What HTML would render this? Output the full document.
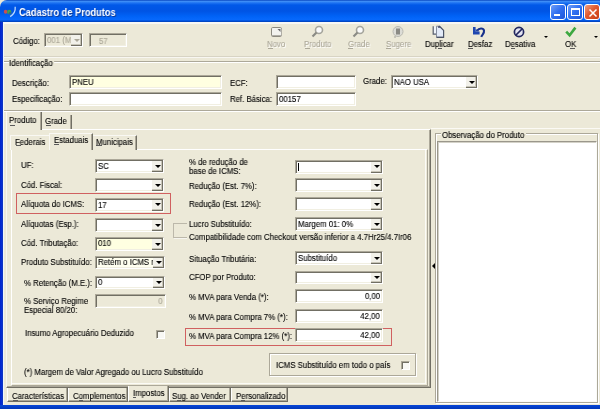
<!DOCTYPE html>
<html><head><meta charset="utf-8"><style>
html,body{margin:0;padding:0;}
body{width:600px;height:409px;position:relative;overflow:hidden;background:#ece9d8;font-family:"Liberation Sans", sans-serif;}
body>div{position:absolute;box-sizing:border-box;}
.t{white-space:nowrap;color:#000;-webkit-text-stroke-width:0.12px;will-change:transform;transform:scaleX(0.94);transform-origin:0 0;}
.title{left:0;top:0;width:600px;height:22px;border-radius:7px 0 0 0;
background:linear-gradient(#0847c0 0px,#3c8cf6 1.5px,#1c72f2 3px,#0058e8 5px,#0054e4 11px,#0062f6 16px,#0668fc 19.5px,#0050d8 21px,#003cb0 22px);}
.tb{position:absolute;top:4px;width:16px;height:16px;border:1px solid #fff;border-radius:3px;box-sizing:border-box;
background:linear-gradient(135deg,#6e9ef8,#2f6ef0 50%,#1e56d8);}
.sk{border-top:1px solid #aca899;border-left:1px solid #aca899;border-bottom:1px solid #fff;border-right:1px solid #fff;
box-shadow:inset 1px 1px 0 #716f64, inset -1px -1px 0 #f1efe2;}
.ddb{background:#f2f1ea;border-right:1px solid #716f64;border-bottom:1px solid #716f64;box-shadow:inset -1px -1px 0 #c8c5b8;}
.arr{width:0;height:0;border-style:solid;border-width:3px 3px 0 3px;border-color:#000 transparent transparent transparent;}
.page{border-top:1px solid #fff;border-left:1px solid #f7f6f0;border-right:1px solid #716f64;border-bottom:1px solid #716f64;
box-shadow:inset -1px -1px 0 #aca899;background:#ece9d8;}
.inner{border-top:1px solid #fff;border-left:1px solid #fff;border-right:1px solid #aca899;border-bottom:1px solid #aca899;box-shadow:inset -1px -1px 0 #ece9d8, inset -2px -2px 0 #fbfbf6;}
.tab{border-top:1px solid #f9f8f3;border-left:1px solid #f9f8f3;border-right:1px solid #716f64;box-shadow:inset -1px 0 0 #aca899;background:#ece9d8;}

.btab{border-bottom:1px solid #716f64;border-left:1px solid #fff;border-right:1px solid #716f64;box-shadow:inset -1px -1px 0 #aca899;background:#ece9d8;}
.cb{width:9px;height:9px;border-top:1px solid #aca899;border-left:1px solid #aca899;border-right:1px solid #fff;border-bottom:1px solid #fff;box-shadow:inset 1px 1px 0 #716f64;background:#f8f8f4;}
.etch{border:1px solid #aca899;box-shadow:1px 1px 0 #fff, inset 1px 1px 0 #fff;}
</style></head><body>
<div class="title"></div>
<div style="left:0px;top:22px;width:3px;height:387px;background:linear-gradient(90deg,#0024c8,#0530d8 70%,#1a3aa8)"></div>
<div style="left:3px;top:22px;width:1px;height:383px;background:#f0f6fa"></div>
<div style="left:0px;top:405px;width:600px;height:4px;background:linear-gradient(#0847d8,#0036b8)"></div>
<svg style="position:absolute;left:0;top:0" width="20" height="22" viewBox="0 0 20 22">
<ellipse cx="5.6" cy="11.8" rx="1.8" ry="2" fill="#c85050"/>
<ellipse cx="9.2" cy="12" rx="2.2" ry="2.3" fill="#40a050"/>
<ellipse cx="10.2" cy="13.2" rx="1.4" ry="1.3" fill="#2a6890"/>
<path d="M10.2 16.6 Q15.8 13.2 15.2 6.8" stroke="#b8d8ff" stroke-width="1.3" fill="none"/></svg>
<div class="t" style="left:19px;top:7px;font-size:10px;line-height:12px;font-weight:bold;color:#fff;letter-spacing:0px;-webkit-text-stroke:0;transform:scaleX(0.925);text-shadow:1px 1px 0 #0a3a9a">Cadastro de Produtos</div>
<div class="tb" style="left:550px"><div style="position:absolute;left:3px;top:9px;width:6px;height:2px;background:#fff"></div></div>
<div class="tb" style="left:567px"><div style="position:absolute;left:2.5px;top:3px;width:9px;height:8px;border:1px solid #fff;border-top-width:2px;box-sizing:border-box"></div></div>
<div class="tb" style="left:584px;background:linear-gradient(135deg,#f0a080,#e05a30 45%,#c83c14)"><svg style="position:absolute;left:2.5px;top:2.5px" width="10" height="10"><path d="M1.5 1.5 L8.5 8.5 M8.5 1.5 L1.5 8.5" stroke="#fff" stroke-width="1.5"/></svg></div>
<div style="left:4px;top:22px;width:596px;height:2px;background:#f7f7f5"></div>
<div class="t" style="left:12.5px;top:36px;font-size:8.3px;line-height:10px;">Código:</div>
<div class="sk" style="left:44px;top:33px;width:39px;height:14px;background:#ece9d8"></div>
<div class="t" style="left:46.5px;top:35px;font-size:8.3px;line-height:10px;color:#aca899">001 (M</div>
<div class="ddb" style="left:71px;top:35px;width:11px;height:11px"></div>
<div class="arr" style="left:74px;top:39px;border-top-color:#aca899"></div>
<div class="sk" style="left:89px;top:33px;width:38px;height:14px;background:#ece9d8"></div>
<div class="t" style="left:98.5px;top:36px;font-size:8.3px;line-height:10px;color:#aca899">57</div>
<div class="t" style="left:267px;top:39px;font-size:8.3px;line-height:10px;color:#aca899;text-shadow:1px 1px #fff">Novo</div>
<div class="t" style="left:304px;top:39px;font-size:8.3px;line-height:10px;color:#aca899;text-shadow:1px 1px #fff">Produto</div>
<div class="t" style="left:347.5px;top:39px;font-size:8.3px;line-height:10px;color:#aca899;text-shadow:1px 1px #fff">Grade</div>
<div class="t" style="left:385.7px;top:39px;font-size:8.3px;line-height:10px;color:#aca899;text-shadow:1px 1px #fff">Sugere</div>
<div class="t" style="left:425px;top:39px;font-size:8.3px;line-height:10px;color:#000">Duplicar</div>
<div class="t" style="left:467.7px;top:39px;font-size:8.3px;line-height:10px;color:#000">Desfaz</div>
<div class="t" style="left:505px;top:39px;font-size:8.3px;line-height:10px;color:#000">Desativa</div>
<div class="t" style="left:564.8px;top:39px;font-size:8.3px;line-height:10px;color:#000">OK</div>
<div style="left:267.5px;top:48px;width:5px;height:1px;background:#aca899"></div>
<div style="left:304.5px;top:48px;width:5px;height:1px;background:#aca899"></div>
<div style="left:348px;top:48px;width:5px;height:1px;background:#aca899"></div>
<div style="left:386px;top:48px;width:5px;height:1px;background:#aca899"></div>
<div style="left:437.5px;top:48px;width:4px;height:1px;background:#5a5a5a"></div>
<div style="left:468px;top:48px;width:5px;height:1px;background:#5a5a5a"></div>
<div style="left:511px;top:48px;width:4px;height:1px;background:#5a5a5a"></div>
<div style="left:570px;top:48px;width:5px;height:1px;background:#5a5a5a"></div>
<svg style="position:absolute;left:270px;top:26px" width="14" height="12" viewBox="0 0 14 12">
<rect x="1.5" y="1.5" width="10" height="9" rx="1.2" fill="#f2f2ee" stroke="#8c8a80"/>
<path d="M1.5 9.5 H11.5 V3" stroke="#b0aea6" fill="none"/>
<path d="M7.5 3 L10.5 3 L10.5 6 Z" fill="#6a6a6a"/></svg>
<svg style="position:absolute;left:311px;top:25px" width="13" height="13" viewBox="0 0 13 13">
<circle cx="8" cy="5" r="3.5" fill="#fafafa" stroke="#a4a49c" stroke-width="1.6"/>
<path d="M5.5 7.5 L1.5 11.5" stroke="#8a8a84" stroke-width="2.2"/></svg>
<svg style="position:absolute;left:351.5px;top:25px" width="13" height="13" viewBox="0 0 13 13">
<circle cx="8" cy="5" r="3.5" fill="#fafafa" stroke="#a4a49c" stroke-width="1.6"/>
<path d="M5.5 7.5 L1.5 11.5" stroke="#8a8a84" stroke-width="2.2"/></svg>
<svg style="position:absolute;left:392px;top:26px" width="12" height="12" viewBox="0 0 12 12">
<circle cx="6" cy="5.5" r="5" fill="#dcdcd6" stroke="#b8b8b0"/>
<rect x="4" y="2.5" width="4" height="6" fill="#8a8a84"/><path d="M3 10 L3 12" stroke="#a0a09a"/></svg>
<svg style="position:absolute;left:432px;top:25px" width="14" height="14" viewBox="0 0 14 14">
<path d="M1.5 1.5 H5 V9.5 H1.5Z" fill="#eef3fa"/>
<path d="M1.2 1.3 V9.2 H4" stroke="#555c6c" stroke-width="1.2" fill="none"/>
<path d="M4.5 1.2 H7.6 L11.6 5.4 V12.2 H4.5 Z" fill="#e2eaf8" stroke="#7a8294" stroke-width="0.9"/>
<path d="M7.2 1 L11.8 5.6 M11.6 5.4 V12.4 H4.5" stroke="#4a5266" stroke-width="1.1" fill="none"/>
<circle cx="7" cy="2" r="1.1" fill="#4a5070"/></svg>
<svg style="position:absolute;left:472px;top:26px" width="14" height="13" viewBox="0 0 14 13">
<path d="M1 1 H3.6 V5.6 H7.6 V8.6 H1 Z" fill="#1e46b0"/>
<path d="M3.6 5.6 L3.6 2.8 L6.8 5.6 Z" fill="#1e46b0"/>
<path d="M5.2 4.6 C7 2, 11.2 1.6, 12 4.6 C12.6 7.2, 10.2 8.4, 9.2 10.8" stroke="#17318c" stroke-width="2.1" fill="none"/></svg>
<svg style="position:absolute;left:513px;top:25.5px" width="12" height="12" viewBox="0 0 12 12">
<circle cx="6" cy="6" r="4.6" fill="#e4e4f2" stroke="#22275e" stroke-width="1.7"/>
<path d="M3 9 L9 3" stroke="#22275e" stroke-width="1.7"/></svg>
<svg style="position:absolute;left:564.5px;top:26px" width="12" height="12" viewBox="0 0 12 12">
<path d="M1.2 5.6 L4.6 9.2 L10.4 1.6" stroke="#3ca840" stroke-width="2.6" fill="none"/></svg>
<div class="arr" style="left:543.5px;top:36px;border-width:2.5px 2px 0 2px"></div>
<div class="arr" style="left:593.5px;top:36px;border-width:2.5px 2px 0 2px"></div>
<div style="left:4px;top:56px;width:596px;height:1px;background:#d8d4c4"></div>
<div style="left:4px;top:57px;width:596px;height:1px;background:#f8f7f2"></div>
<div style="left:4px;top:61px;width:596px;height:1px;background:#aca899"></div>
<div style="left:4px;top:62px;width:596px;height:1px;background:#fff"></div>
<div class="t" style="left:9px;top:58px;font-size:8.3px;line-height:10px;background:#ece9d8;padding-right:1px">Identificação</div>
<div class="t" style="left:11.7px;top:78px;font-size:8.3px;line-height:10px;">Descrição:</div>
<div class="sk" style="left:69px;top:75px;width:153px;height:14px;background:#ffffe1"></div>
<div class="t" style="left:71.5px;top:77px;font-size:8.3px;line-height:10px;">PNEU</div>
<div class="t" style="left:11.7px;top:94px;font-size:8.3px;line-height:10px;">Especificação:</div>
<div class="sk" style="left:69px;top:92px;width:153px;height:14px;background:#fff"></div>
<div class="t" style="left:230px;top:78px;font-size:8.3px;line-height:10px;">ECF:</div>
<div class="sk" style="left:276px;top:75px;width:79.5px;height:14px;background:#fff"></div>
<div class="t" style="left:230px;top:94px;font-size:8.3px;line-height:10px;">Ref. Básica:</div>
<div class="sk" style="left:276px;top:92px;width:79.5px;height:14px;background:#fff"></div>
<div class="t" style="left:278.5px;top:94px;font-size:8.3px;line-height:10px;">00157</div>
<div class="t" style="left:363px;top:76px;font-size:8.3px;line-height:10px;">Grade:</div>
<div class="sk" style="left:391px;top:75px;width:86.5px;height:14.25px;background:#fff"></div>
<div class="t" style="left:393.5px;top:77px;font-size:8.3px;line-height:10px;">NAO USA</div>
<div class="ddb" style="left:465.5px;top:77px;width:11px;height:11.25px"></div>
<div class="arr" style="left:468.5px;top:81px;"></div>
<div style="left:4px;top:110px;width:596px;height:1px;background:#aca899"></div>
<div style="left:4px;top:111px;width:596px;height:1px;background:#fff"></div>
<div class="page" style="left:6px;top:129px;width:425px;height:259px"></div>
<div class="tab" style="left:6px;top:112px;width:36px;height:18px;border-top:none"></div>
<div class="t" style="left:9px;top:115px;font-size:8.3px;line-height:10px;">Produto</div>
<div style="left:9.5px;top:124.5px;width:5px;height:1px;background:#5a5a5a"></div>
<div class="tab" style="left:42px;top:114.5px;width:29.5px;height:14.5px;border-left:none;border-top:none"></div>
<div class="t" style="left:45.3px;top:116px;font-size:8.3px;line-height:10px;">Grade</div>
<div style="left:45.8px;top:125px;width:5px;height:1px;background:#5a5a5a"></div>
<div class="inner" style="left:11px;top:149px;width:417px;height:237px"></div>
<div class="tab" style="left:10px;top:134.5px;width:40px;height:15px;border-right:none;box-shadow:none"></div>
<div class="t" style="left:15px;top:137px;font-size:8.3px;line-height:10px;">Federais</div>
<div style="left:15.5px;top:145px;width:5px;height:1px;background:#5a5a5a"></div>
<div class="tab" style="left:49px;top:133px;width:44px;height:17px"></div>
<div class="t" style="left:53.7px;top:135px;font-size:8.3px;line-height:10px;">Estaduais</div>
<div style="left:54px;top:144px;width:5px;height:1px;background:#5a5a5a"></div>
<div class="tab" style="left:93px;top:134.5px;width:44px;height:15px;border-left:none"></div>
<div class="t" style="left:95.8px;top:137px;font-size:8.3px;line-height:10px;">Municipais</div>
<div style="left:96px;top:145px;width:6px;height:1px;background:#5a5a5a"></div>
<div class="t" style="left:21px;top:160px;font-size:8.3px;line-height:10px;">UF:</div>
<div class="sk" style="left:95px;top:159px;width:69px;height:14px;background:#fff"></div>
<div class="t" style="left:97.5px;top:161px;font-size:8.3px;line-height:10px;">SC</div>
<div class="ddb" style="left:152px;top:161px;width:11px;height:11px"></div>
<div class="arr" style="left:155px;top:165px;"></div>
<div class="t" style="left:21px;top:180px;font-size:8.3px;line-height:10px;">Cód. Fiscal:</div>
<div class="sk" style="left:95px;top:178px;width:69px;height:14px;background:#fff"></div>
<div class="ddb" style="left:152px;top:180px;width:11px;height:11px"></div>
<div class="arr" style="left:155px;top:184px;"></div>
<div style="left:16px;top:192.5px;width:155px;height:21.5px;border:1px solid #d06060;box-sizing:border-box"></div>
<div class="t" style="left:21px;top:199px;font-size:8.3px;line-height:10px;">Alíquota do ICMS:</div>
<div class="sk" style="left:95px;top:197.5px;width:69px;height:14px;background:#fff"></div>
<div class="t" style="left:97.5px;top:200px;font-size:8.3px;line-height:10px;">17</div>
<div class="ddb" style="left:152px;top:199.5px;width:11px;height:11px"></div>
<div class="arr" style="left:155px;top:203px;"></div>
<div class="t" style="left:21px;top:219px;font-size:8.3px;line-height:10px;">Alíquotas (Esp.):</div>
<div class="sk" style="left:95px;top:218px;width:69px;height:13.5px;background:#fff"></div>
<div class="ddb" style="left:152px;top:220px;width:11px;height:10.5px"></div>
<div class="arr" style="left:155px;top:224px;"></div>
<div class="t" style="left:21px;top:238px;font-size:8.3px;line-height:10px;">Cód. Tributação:</div>
<div class="sk" style="left:95px;top:237px;width:69px;height:13.5px;background:#ffffe1"></div>
<div class="t" style="left:97.5px;top:238px;font-size:8.3px;line-height:10px;">010</div>
<div class="ddb" style="left:152px;top:239px;width:11px;height:10.5px"></div>
<div class="arr" style="left:155px;top:243px;"></div>
<div class="t" style="left:21px;top:257px;font-size:8.3px;line-height:10px;">Produto Substituído:</div>
<div class="sk" style="left:95px;top:256px;width:69.5px;height:13px;background:#fffff0"></div>
<div class="t" style="left:97.5px;top:257px;font-size:8.3px;line-height:10px;">Retém o ICMS r</div>
<div class="ddb" style="left:152.5px;top:258px;width:11px;height:10px"></div>
<div class="arr" style="left:155.5px;top:261px;"></div>
<div class="t" style="left:23.8px;top:278px;font-size:8.3px;line-height:10px;">% Retenção (M.E.):</div>
<div class="sk" style="left:95px;top:275.6px;width:69.5px;height:13.4px;background:#fff"></div>
<div class="t" style="left:97.5px;top:277px;font-size:8.3px;line-height:10px;">0</div>
<div class="ddb" style="left:152.5px;top:277.6px;width:11px;height:10.4px"></div>
<div class="arr" style="left:155.5px;top:281px;"></div>
<div class="t" style="left:23.8px;top:296px;font-size:8.3px;line-height:10px;">% Serviço Regime</div>
<div class="t" style="left:24px;top:305px;font-size:8.3px;line-height:10px;">Especial 80/20:</div>
<div class="sk" style="left:95px;top:294px;width:70.5px;height:14.3px;background:#ece9d8"></div>
<div class="t" style="right:437.0px;top:296px;font-size:8.3px;line-height:10px;transform-origin:100% 0;color:#aca899">0</div>
<div class="t" style="left:25px;top:328px;font-size:8.3px;line-height:10px;">Insumo Agropecuário Deduzido</div>
<div class="cb" style="left:156px;top:330px"></div>
<div class="t" style="left:24px;top:367px;font-size:8.3px;line-height:10px;">(*) Margem de Valor Agregado ou Lucro Substituído</div>
<div class="t" style="left:189px;top:157px;font-size:8.3px;line-height:10px;">% de redução de</div>
<div class="t" style="left:189px;top:166px;font-size:8.3px;line-height:10px;">base de ICMS:</div>
<div class="sk" style="left:295px;top:159.5px;width:88px;height:14px;background:#fff"></div>
<div class="ddb" style="left:371px;top:161.5px;width:11px;height:11px"></div>
<div class="arr" style="left:374px;top:165px;"></div>
<div style="left:297.5px;top:162.5px;width:1px;height:8px;background:#000"></div>
<div class="t" style="left:189px;top:181px;font-size:8.3px;line-height:10px;">Redução (Est. 7%):</div>
<div class="sk" style="left:295px;top:178px;width:88px;height:14px;background:#fff"></div>
<div class="ddb" style="left:371px;top:180px;width:11px;height:11px"></div>
<div class="arr" style="left:374px;top:184px;"></div>
<div class="t" style="left:189px;top:199px;font-size:8.3px;line-height:10px;">Redução (Est. 12%):</div>
<div class="sk" style="left:295px;top:197px;width:88px;height:14px;background:#fff"></div>
<div class="ddb" style="left:371px;top:199px;width:11px;height:11px"></div>
<div class="arr" style="left:374px;top:203px;"></div>
<div style="left:173px;top:223px;width:14px;height:1px;background:#bcb8aa"></div>
<div style="left:173px;top:223px;width:1px;height:14px;background:#bcb8aa"></div>
<div style="left:173px;top:237px;width:14px;height:1px;background:#bcb8aa"></div>
<div style="left:174px;top:238px;width:13px;height:1px;background:#f6f5ef"></div>
<div class="t" style="left:189px;top:219px;font-size:8.3px;line-height:10px;">Lucro Substituído:</div>
<div class="sk" style="left:295px;top:217px;width:88px;height:13.6px;background:#fff"></div>
<div class="t" style="left:297.5px;top:219px;font-size:8.3px;line-height:10px;">Margem 01: 0%</div>
<div class="ddb" style="left:371px;top:219px;width:11px;height:10.6px"></div>
<div class="arr" style="left:374px;top:223px;"></div>
<div class="t" style="left:188.7px;top:232px;font-size:8.3px;line-height:10px;">Compatibilidade com Checkout versão inferior a 4.7Hr25/4.7Ir06</div>
<div class="t" style="left:189px;top:254px;font-size:8.3px;line-height:10px;">Situação Tributária:</div>
<div class="sk" style="left:295px;top:251.4px;width:87.5px;height:13.6px;background:#fff"></div>
<div class="t" style="left:297.5px;top:253px;font-size:8.3px;line-height:10px;">Substituído</div>
<div class="ddb" style="left:370.5px;top:253.4px;width:11px;height:10.6px"></div>
<div class="arr" style="left:373.5px;top:257px;"></div>
<div class="t" style="left:189px;top:272px;font-size:8.3px;line-height:10px;">CFOP por Produto:</div>
<div class="sk" style="left:295px;top:270.7px;width:87.5px;height:13px;background:#fff"></div>
<div class="ddb" style="left:370.5px;top:272.7px;width:11px;height:10px"></div>
<div class="arr" style="left:373.5px;top:276px;"></div>
<div class="t" style="left:189px;top:292px;font-size:8.3px;line-height:10px;">% MVA para Venda (*):</div>
<div class="sk" style="left:295px;top:289.4px;width:87.5px;height:13.4px;background:#fff"></div>
<div class="t" style="right:220.0px;top:291px;font-size:8.3px;line-height:10px;transform-origin:100% 0;">0,00</div>
<div class="t" style="left:189px;top:312px;font-size:8.3px;line-height:10px;">% MVA para Compra 7% (*):</div>
<div class="sk" style="left:295px;top:309.2px;width:87.5px;height:13.4px;background:#fff"></div>
<div class="t" style="right:220.0px;top:311px;font-size:8.3px;line-height:10px;transform-origin:100% 0;">42,00</div>
<div style="left:185px;top:327.6px;width:206.5px;height:18.6px;border:1px solid #d06060;box-sizing:border-box"></div>
<div class="t" style="left:189px;top:331px;font-size:8.3px;line-height:10px;">% MVA para Compra 12% (*):</div>
<div class="sk" style="left:295px;top:328.4px;width:87.5px;height:14px;background:#fff"></div>
<div class="t" style="right:220.0px;top:330px;font-size:8.3px;line-height:10px;transform-origin:100% 0;">42,00</div>
<div class="etch" style="left:269px;top:353px;width:147px;height:22.6px"></div>
<div class="t" style="left:276px;top:360px;font-size:8.3px;line-height:10px;">ICMS Substituído em todo o país</div>
<div class="cb" style="left:401px;top:361px"></div>
<div class="btab" style="left:7px;top:388px;width:61px;height:13.5px"></div>
<div class="t" style="left:12px;top:391px;font-size:8.3px;line-height:10px;">Características</div>
<div class="btab" style="left:68px;top:388px;width:59.5px;height:13.5px"></div>
<div class="t" style="left:73px;top:391px;font-size:8.3px;line-height:10px;">Complementos</div>
<div class="btab" style="left:128px;top:386px;width:41px;height:16px;border-left:1px solid #fff"></div>
<div class="t" style="left:132.7px;top:388px;font-size:8.3px;line-height:10px;">Impostos</div>
<div class="btab" style="left:169px;top:388px;width:62px;height:13.5px"></div>
<div class="t" style="left:172.4px;top:391px;font-size:8.3px;line-height:10px;">Sug. ao Vender</div>
<div class="btab" style="left:231px;top:388px;width:57px;height:13.5px"></div>
<div class="t" style="left:236px;top:391px;font-size:8.3px;line-height:10px;">Personalizado</div>
<div style="left:12.5px;top:400px;width:5px;height:1px;background:#5a5a5a"></div>
<div style="left:78.5px;top:400px;width:4px;height:1px;background:#5a5a5a"></div>
<div style="left:133px;top:396.5px;width:3px;height:1px;background:#5a5a5a"></div>
<div style="left:177px;top:400px;width:4px;height:1px;background:#5a5a5a"></div>
<div style="left:241px;top:400px;width:4px;height:1px;background:#5a5a5a"></div>
<div style="left:432px;top:263px;width:0;height:0;border-style:solid;border-width:3px 3px 3px 0;border-color:transparent #000 transparent transparent"></div>
<div class="etch" style="left:435px;top:133px;width:163px;height:270px"></div>
<div style="left:431px;top:128px;width:169px;height:1px;background:#fbfaf5"></div>
<div class="t" style="left:441px;top:130px;font-size:8.3px;line-height:10px;background:#ece9d8;padding:0 1px">Observação do Produto</div>
<div style="left:437px;top:141px;width:160px;height:260.5px;background:#fff;border-top:1px solid #9a978b;border-left:1px solid #9a978b;border-right:1px solid #fbfbf8;border-bottom:1px solid #fbfbf8;box-shadow:inset 1px 1px 0 #d4d2c8"></div>
</body></html>
